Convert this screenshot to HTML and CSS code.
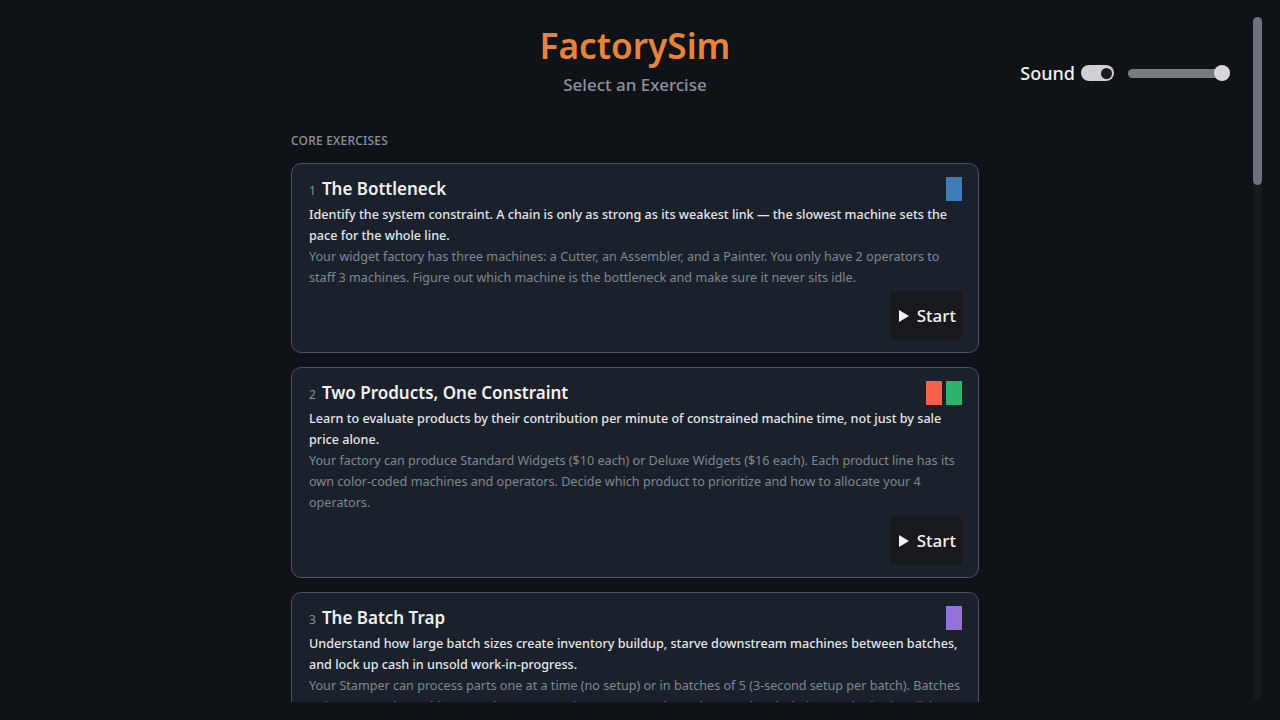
FILE: index.html
```html
<!DOCTYPE html>
<html lang="en">
<head>
    <meta charset="UTF-8">
    <meta name="viewport" content="width=device-width, initial-scale=1.0">
    <title>FactorySim</title>
    <link rel="stylesheet" href="styles.css">
</head>
<body>
    <div class="app">
        <div class="page" id="page">
            <header class="top">
                <div class="brand">
                    <h1>FactorySim</h1>
                    <p class="subtitle">Select an Exercise</p>
                </div>
                <div class="sound">
                    <span class="sound-label">Sound</span>
                    <span class="toggle on"><span class="knob"></span></span>
                    <input class="volume" type="range" min="0" max="100" value="100">
                </div>
            </header>

            <main class="exercises">
                <h2 class="section-label">Core Exercises</h2>

                <div class="card">
                    <div class="card-head">
                        <h3><span class="num">1</span>The Bottleneck</h3>
                        <div class="tags"><span class="tag blue"></span></div>
                    </div>
                    <p class="lead">Identify the system constraint. A chain is only as strong as its weakest link — the slowest machine sets the pace for the whole line.</p>
                    <p class="detail">Your widget factory has three machines: a Cutter, an Assembler, and a Painter. You only have 2 operators to staff 3 machines. Figure out which machine is the bottleneck and make sure it never sits idle.</p>
                    <div class="card-foot">
                        <button class="start"><svg viewBox="0 0 12 12" width="12" height="12"><polygon points="1,0 11,6 1,12" fill="currentColor"/></svg>Start</button>
                    </div>
                </div>

                <div class="card">
                    <div class="card-head">
                        <h3><span class="num">2</span>Two Products, One Constraint</h3>
                        <div class="tags"><span class="tag red"></span><span class="tag green"></span></div>
                    </div>
                    <p class="lead">Learn to evaluate products by their contribution per minute of constrained machine time, not just by sale price alone.</p>
                    <p class="detail">Your factory can produce Standard Widgets ($10 each) or Deluxe Widgets ($16 each). Each product line has its own color-coded machines and operators. Decide which product to prioritize and how to allocate your 4 operators.</p>
                    <div class="card-foot">
                        <button class="start"><svg viewBox="0 0 12 12" width="12" height="12"><polygon points="1,0 11,6 1,12" fill="currentColor"/></svg>Start</button>
                    </div>
                </div>

                <div class="card">
                    <div class="card-head">
                        <h3><span class="num">3</span>The Batch Trap</h3>
                        <div class="tags"><span class="tag purple"></span></div>
                    </div>
                    <p class="lead">Understand how large batch sizes create inventory buildup, starve downstream machines between batches, and lock up cash in unsold work-in-progress.</p>
                    <p class="detail">Your Stamper can process parts one at a time (no setup) or in batches of 5 (3-second setup per batch). Batches only move to the Welder once they are complete. Compare throughput and cash tied up under both policies.</p>
                    <div class="card-foot">
                        <button class="start"><svg viewBox="0 0 12 12" width="12" height="12"><polygon points="1,0 11,6 1,12" fill="currentColor"/></svg>Start</button>
                    </div>
                </div>

                <div class="card">
                    <div class="card-head">
                        <h3><span class="num">4</span>Drum, Buffer, Rope</h3>
                        <div class="tags"><span class="tag blue"></span></div>
                    </div>
                    <p class="lead">Pace material release to the constraint and protect it with a small buffer so the line never floods with inventory.</p>
                    <p class="detail">Raw material arrives faster than your Drill can handle it. Set the release rate at the front of the line and size the buffer in front of the Drill to keep it busy without piling up parts.</p>
                    <div class="card-foot">
                        <button class="start"><svg viewBox="0 0 12 12" width="12" height="12"><polygon points="1,0 11,6 1,12" fill="currentColor"/></svg>Start</button>
                    </div>
                </div>

                <div class="card">
                    <div class="card-head">
                        <h3><span class="num">5</span>Variability Hurts</h3>
                        <div class="tags"><span class="tag red"></span></div>
                    </div>
                    <p class="lead">See how random variation in cycle times reduces throughput even when average capacity looks sufficient.</p>
                    <p class="detail">Three balanced machines each average 4 seconds per part, but their times vary. Watch queues form and disappear, then try adding buffers between stations to recover lost output.</p>
                    <div class="card-foot">
                        <button class="start"><svg viewBox="0 0 12 12" width="12" height="12"><polygon points="1,0 11,6 1,12" fill="currentColor"/></svg>Start</button>
                    </div>
                </div>

                <div class="card">
                    <div class="card-head">
                        <h3><span class="num">6</span>Setup Reduction</h3>
                        <div class="tags"><span class="tag purple"></span></div>
                    </div>
                    <p class="lead">Cut changeover time on the constraint and watch smaller batches become affordable.</p>
                    <p class="detail">The Press needs a setup every time it switches parts. Spend time on quick-change tooling and find the batch size that keeps the Press busy while keeping inventory low.</p>
                    <div class="card-foot">
                        <button class="start"><svg viewBox="0 0 12 12" width="12" height="12"><polygon points="1,0 11,6 1,12" fill="currentColor"/></svg>Start</button>
                    </div>
                </div>

                <h2 class="section-label">Advanced Exercises</h2>

                <div class="card">
                    <div class="card-head">
                        <h3><span class="num">7</span>Shifting Constraint</h3>
                        <div class="tags"><span class="tag blue"></span><span class="tag green"></span></div>
                    </div>
                    <p class="lead">When you elevate one constraint, another takes its place. Keep finding the new bottleneck as the line improves.</p>
                    <p class="detail">Every few minutes you can buy an upgrade for one machine. Track where the line is limited after each purchase and spend your budget where it raises throughput the most.</p>
                    <div class="card-foot">
                        <button class="start"><svg viewBox="0 0 12 12" width="12" height="12"><polygon points="1,0 11,6 1,12" fill="currentColor"/></svg>Start</button>
                    </div>
                </div>

                <div class="card">
                    <div class="card-head">
                        <h3><span class="num">8</span>Market Demand</h3>
                        <div class="tags"><span class="tag red"></span><span class="tag green"></span></div>
                    </div>
                    <p class="lead">Sometimes the constraint is outside the factory. Learn to recognize when demand, not capacity, limits profit.</p>
                    <p class="detail">Orders arrive at a fixed rate for both products. Balance operators between lines so that you fill the orders you can sell without building stock nobody will buy.</p>
                    <div class="card-foot">
                        <button class="start"><svg viewBox="0 0 12 12" width="12" height="12"><polygon points="1,0 11,6 1,12" fill="currentColor"/></svg>Start</button>
                    </div>
                </div>

                <div class="card">
                    <div class="card-head">
                        <h3><span class="num">9</span>Breakdowns</h3>
                        <div class="tags"><span class="tag purple"></span></div>
                    </div>
                    <p class="lead">Machines fail. Decide where spare capacity and maintenance time do the most good for the whole system.</p>
                    <p class="detail">Each machine has a chance of breaking down every minute. Assign your single technician and choose which machines get preventive maintenance during the shift.</p>
                    <div class="card-foot">
                        <button class="start"><svg viewBox="0 0 12 12" width="12" height="12"><polygon points="1,0 11,6 1,12" fill="currentColor"/></svg>Start</button>
                    </div>
                </div>

                <div class="card">
                    <div class="card-head">
                        <h3><span class="num">10</span>Shared Resources</h3>
                        <div class="tags"><span class="tag blue"></span><span class="tag red"></span></div>
                    </div>
                    <p class="lead">Two product lines compete for one machine. Schedule the shared resource so neither line starves.</p>
                    <p class="detail">Both lines route through a single Oven. Decide how long each product holds the Oven before switching, and watch how that choice ripples through both lines.</p>
                    <div class="card-foot">
                        <button class="start"><svg viewBox="0 0 12 12" width="12" height="12"><polygon points="1,0 11,6 1,12" fill="currentColor"/></svg>Start</button>
                    </div>
                </div>

                <div class="card">
                    <div class="card-head">
                        <h3><span class="num">11</span>Quality at the Constraint</h3>
                        <div class="tags"><span class="tag green"></span></div>
                    </div>
                    <p class="lead">A defect found after the bottleneck wastes the most valuable time in the plant. Move inspection where it counts.</p>
                    <p class="detail">Some parts leave the Lathe with flaws. Choose where to place your inspector so bad parts are caught before they consume time on the Grinder.</p>
                    <div class="card-foot">
                        <button class="start"><svg viewBox="0 0 12 12" width="12" height="12"><polygon points="1,0 11,6 1,12" fill="currentColor"/></svg>Start</button>
                    </div>
                </div>

                <div class="card">
                    <div class="card-head">
                        <h3><span class="num">12</span>The Full Plant</h3>
                        <div class="tags"><span class="tag blue"></span><span class="tag red"></span><span class="tag green"></span></div>
                    </div>
                    <p class="lead">Put everything together: multiple products, shared machines, batching, variability and limited operators.</p>
                    <p class="detail">Run a complete shift and maximize profit. Every decision from the earlier exercises is available, and every mistake shows up on the cash balance at the end of the day.</p>
                    <div class="card-foot">
                        <button class="start"><svg viewBox="0 0 12 12" width="12" height="12"><polygon points="1,0 11,6 1,12" fill="currentColor"/></svg>Start</button>
                    </div>
                </div>

                <h2 class="section-label">Sandbox</h2>

                <div class="card">
                    <div class="card-head">
                        <h3><span class="num">13</span>Free Play</h3>
                        <div class="tags"><span class="tag purple"></span></div>
                    </div>
                    <p class="lead">Build your own line with any machines, products and operators, and test the ideas from every exercise.</p>
                    <p class="detail">No goals and no timer. Add or remove stations, change cycle times and batch sizes, and watch throughput, inventory and cash update as the line runs.</p>
                    <div class="card-foot">
                        <button class="start"><svg viewBox="0 0 12 12" width="12" height="12"><polygon points="1,0 11,6 1,12" fill="currentColor"/></svg>Start</button>
                    </div>
                </div>
            </main>
        </div>

        <!-- custom scroll rail, thumb follows the page scroll -->
        <div class="rail"><div class="thumb" id="thumb"></div></div>
    </div>

    <script>
        const page = document.getElementById('page');
        const thumb = document.getElementById('thumb');
        const rail = thumb.parentElement;

        function updateThumb() {
            const ratio = page.clientHeight / page.scrollHeight;
            const h = Math.max(30, rail.clientHeight * ratio);
            const maxTop = rail.clientHeight - h;
            const top = maxTop * page.scrollTop / (page.scrollHeight - page.clientHeight || 1);
            thumb.style.height = h + 'px';
            thumb.style.marginTop = top + 'px';
        }

        page.addEventListener('scroll', updateThumb);
        window.addEventListener('resize', updateThumb);
        updateThumb();
    </script>
</body>
</html>
```

FILE: styles.css
```css
html, body {
    margin: 0;
    height: 100%;
    overflow: hidden;
    background: #0f1317;
}
body {
    font-family: "Noto Sans", "Open Sans", sans-serif;
    color: #e6e9ee;
}
.app {
    display: flex;
    height: calc(100vh - 18px);
}
.page {
    flex: 1;
    padding: 24px 0 60px 17px;
    box-sizing: border-box;
    overflow-y: auto;
    scrollbar-width: none;
}
.rail {
    width: 9px;
    margin: 17px 18px 2px 0;
    border-radius: 5px;
    background: #18191c;
}
.thumb {
    height: 160px;
    border-radius: 5px;
    background: #6f7278;
}

/* header */
.top {
    display: grid;
    grid-template-columns: 1fr auto 1fr;
}
.brand {
    grid-column: 2;
    text-align: center;
}
h1 {
    margin: 0;
    font-size: 35.2px;
    line-height: 42px;
    font-weight: 600;
    color: #e8843a;
}
.subtitle {
    margin: 9px 0 0;
    font-size: 17px;
    line-height: 20px;
    font-weight: 500;
    color: #8b929c;
}
.sound {
    grid-column: 3;
    justify-self: end;
    align-self: start;
    display: flex;
    align-items: center;
    margin: 41px 23px 0 0;
    height: 16px;
}
.sound-label {
    font-size: 18px;
    font-weight: 500;
    color: #f0f0f0;
    margin-right: 6px;
}
.toggle {
    width: 33px;
    height: 16px;
    border-radius: 8px;
    background: #cfd0d4;
    position: relative;
}
.toggle .knob {
    position: absolute;
    top: 2.5px;
    left: 2.5px;
    width: 11px;
    height: 11px;
    border-radius: 50%;
    background: #1a1b1e;
}
.toggle.on .knob {
    left: 20px;
}
.volume {
    -webkit-appearance: none;
    appearance: none;
    width: 102px;
    height: 16px;
    margin: 0 0 0 14px;
    background: transparent;
}
.volume::-webkit-slider-runnable-track {
    height: 9px;
    border-radius: 5px;
    background: #7a7b7f;
}
.volume::-webkit-slider-thumb {
    -webkit-appearance: none;
    width: 16px;
    height: 16px;
    margin-top: -3.5px;
    border-radius: 50%;
    background: #d6d7da;
}

/* exercise list */
.exercises {
    max-width: 688px;
    margin: 0 auto;
}
.section-label {
    margin: 38px 0 14px;
    font-size: 12px;
    line-height: 16px;
    font-weight: 500;
    letter-spacing: 0.2px;
    text-transform: uppercase;
    color: #8b929c;
}
.card {
    background: #1b212b;
    border: 1px solid #4a525e;
    border-radius: 10px;
    padding: 13px 16px 12px 17px;
    margin-bottom: 14px;
}
.card-head {
    display: flex;
    justify-content: space-between;
    align-items: flex-start;
    height: 24px;
    margin-bottom: 3px;
}
h3 {
    margin: 0;
    font-size: 17px;
    line-height: 24px;
    font-weight: 600;
    color: #eef0f3;
}
.num {
    font-size: 12px;
    font-weight: 400;
    color: #8b929c;
    margin-right: 6px;
}
.tags {
    display: flex;
    gap: 4px;
}
.tag {
    width: 16px;
    height: 24px;
}
.tag.blue { background: #3e7db8; }
.tag.red { background: #f4604a; }
.tag.green { background: #2fb36c; }
.tag.purple { background: #9671db; }
.lead {
    margin: 0;
    font-size: 12.6px;
    line-height: 21px;
    font-weight: 500;
    color: #e3e6ea;
}
.detail {
    margin: 0;
    font-size: 12.6px;
    line-height: 21px;
    color: #7f8791;
}
.card-foot {
    display: flex;
    justify-content: flex-end;
    margin-top: 3px;
}
.start {
    display: flex;
    align-items: center;
    gap: 7px;
    height: 49px;
    padding: 0 6px 0 8px;
    border: none;
    border-radius: 4px;
    background: #18191d;
    color: #f2f2f2;
    font-family: inherit;
    font-size: 17px;
    font-weight: 500;
    cursor: pointer;
}
```
